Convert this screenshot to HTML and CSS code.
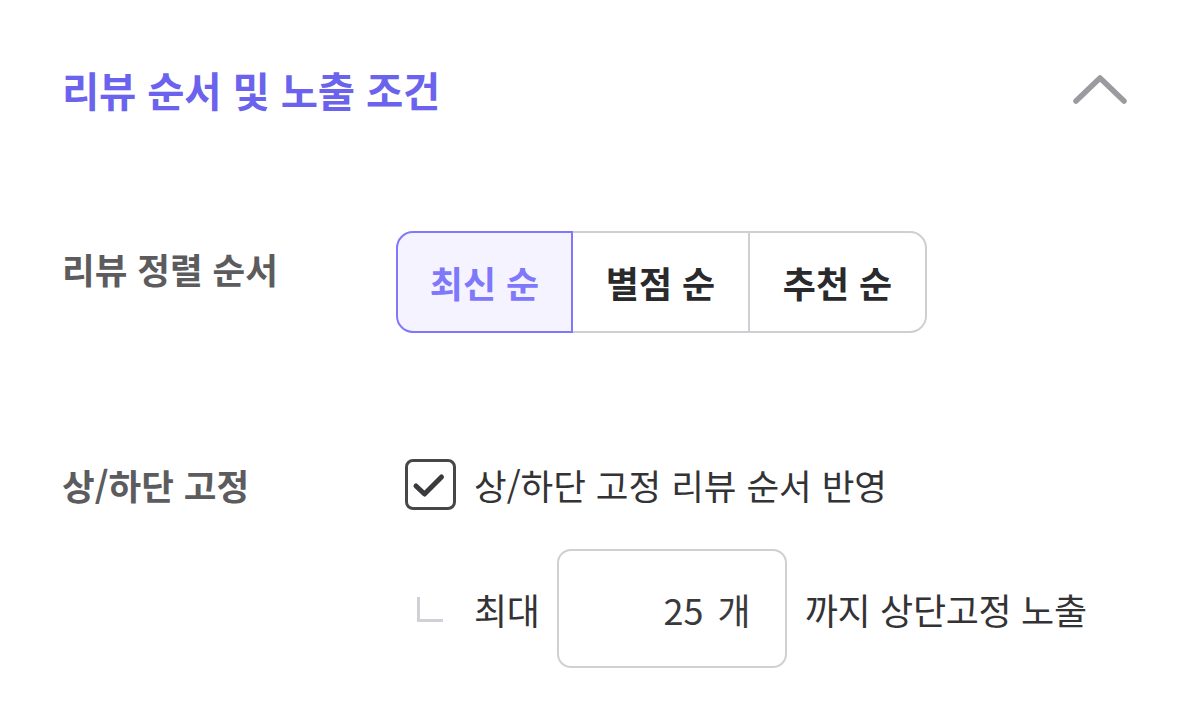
FILE: index.html
```html
<!DOCTYPE html>
<html lang="ko">
<head>
<meta charset="utf-8">
<link rel="stylesheet" href="styles.css">
</head>
<body>
<div class="panel">
  <div class="header">
    <h2 class="title">리뷰 순서 및 노출 조건</h2>
    <svg class="chevron" width="56" height="32" viewBox="0 0 56 32"><polyline points="3,27 27,4 51,27" fill="none" stroke="#9a9a9f" stroke-width="5.5" stroke-linecap="round" stroke-linejoin="round"/></svg>
  </div>
  <div class="row row-sort">
    <div class="label">리뷰 정렬 순서</div>
    <div class="segments">
      <button class="seg active">최신 순</button>
      <button class="seg">별점 순</button>
      <button class="seg">추천 순</button>
    </div>
  </div>
  <div class="row row-fix">
    <div class="label">상/하단 고정</div>
    <div class="fix-body">
      <label class="check">
        <span class="box"><svg width="34" height="28" viewBox="0 0 34 28"><polyline points="4,15 12.5,23 29.5,6" fill="none" stroke="#3a3a3c" stroke-width="5" stroke-linecap="round" stroke-linejoin="round"/></svg></span>
        <span class="check-text">상/하단 고정 리뷰 순서 반영</span>
      </label>
      <div class="max-row">
        <span class="corner"></span>
        <span class="txt">최대</span>
        <div class="num-input"><span>25</span><span class="unit">개</span></div>
        <span class="txt">까지 상단고정 노출</span>
      </div>
    </div>
  </div>
</div>
</body>
</html>
```

FILE: styles.css
```css
* { box-sizing: border-box; }
html, body { margin: 0; padding: 0; background: #ffffff; }
body {
  font-family: "Noto Sans CJK KR", "Noto Sans", sans-serif;
  width: 1198px;
  height: 716px;
  overflow: hidden;
}
.panel {
  padding: 62px 69px 0 62px;
}
.header {
  display: flex;
  justify-content: space-between;
  align-items: center;
  height: 56px;
}
.title {
  margin: 0;
  font-size: 40.5px;
  font-weight: 700;
  color: #6b63ee;
  letter-spacing: -0.2px;
  line-height: 56px;
}
.chevron { display: block; margin-top: 0; }
.row {
  display: flex;
}
.row-sort { margin-top: 113px; }
.row-fix { margin-top: 126px; }
.label {
  width: 334px;
  flex: none;
  font-size: 35.5px;
  font-weight: 700;
  color: #5c5c5e;
  line-height: 40px;
}
.row-sort .label { margin-top: 18px; }
.row-fix .label { margin-top: 6px; }
.segments {
  display: flex;
  height: 102px;
}
.seg {
  width: 177px;
  height: 102px;
  font-family: inherit;
  font-size: 36px;
  font-weight: 700;
  color: #2a2a2c;
  background: #fff;
  border: 2.5px solid #cfcfd3;
  margin: 0;
  padding: 0;
}
.seg + .seg { border-left: none; }
.seg:first-child { border-radius: 17px 0 0 17px; }
.seg:last-child { border-radius: 0 17px 17px 0; }
.seg.active {
  color: #8078fb;
  background: #f4f3ff;
  border-color: #8078fb;
}
.fix-body {
  display: flex;
  flex-direction: column;
  padding-left: 9px;
}
.check {
  display: flex;
  align-items: center;
  gap: 18px;
  height: 51px;
}
.box {
  width: 51px;
  height: 51px;
  border: 3px solid #47474a;
  border-radius: 8px;
  display: flex;
  align-items: center;
  justify-content: center;
}
.box svg { display: block; margin-left: -3px; }
.check-text {
  font-size: 35.5px;
  color: #333335;
  line-height: 40px;
}
.max-row {
  display: flex;
  align-items: center;
  margin-top: 39px;
  margin-left: 12px;
}
.corner {
  width: 26px;
  height: 25px;
  border-left: 3px solid #d0d0d6;
  border-bottom: 3px solid #d0d0d6;
  margin-right: 31px;
  margin-top: 2px;
}
.txt {
  font-size: 36px;
  color: #333335;
  line-height: 40px;
  letter-spacing: -0.3px;
}
.num-input {
  width: 230px;
  height: 119px;
  border: 2.5px solid #d0d0d4;
  border-radius: 14px;
  margin: 0 18px 0 17px;
  display: flex;
  align-items: center;
  justify-content: flex-end;
  padding-right: 34px;
  gap: 14px;
  font-size: 36px;
  color: #3a3a3c;
}
```
